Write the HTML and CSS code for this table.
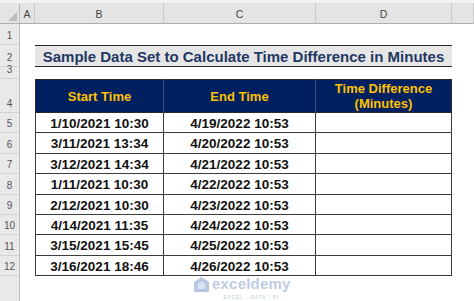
FILE: index.html
```html
<!DOCTYPE html>
<html>
<head>
<meta charset="utf-8">
<link rel="stylesheet" href="styles.css">
</head>
<body>
<div class="sheet">
  <div class="row hdr">
    <div class="rh corner"><span class="tri"></span></div>
    <div class="ca ch">A</div>
    <div class="cb ch">B</div>
    <div class="cc ch">C</div>
    <div class="cd ch">D</div>
    <div class="ce ch"></div>
  </div>
  <div class="row r1"><div class="rh">1</div></div>
  <div class="row r2">
    <div class="rh">2</div>
    <div class="ca"></div>
    <div class="title">Sample Data Set to Calculate Time Difference in Minutes</div>
  </div>
  <div class="row r3"><div class="rh">3</div></div>
  <div class="row r4">
    <div class="rh">4</div>
    <div class="ca"></div>
    <div class="cb th first">Start Time</div>
    <div class="cc th">End Time</div>
    <div class="cd th">Time Difference<br>(Minutes)</div>
  </div>
  <div class="row rd h20"><div class="rh">5</div><div class="ca"></div><div class="cb td first">1/10/2021 10:30</div><div class="cc td">4/19/2022 10:53</div><div class="cd td"></div></div>
  <div class="row rd h21"><div class="rh">6</div><div class="ca"></div><div class="cb td first">3/11/2021 13:34</div><div class="cc td">4/20/2022 10:53</div><div class="cd td"></div></div>
  <div class="row rd h20"><div class="rh">7</div><div class="ca"></div><div class="cb td first">3/12/2021 14:34</div><div class="cc td">4/21/2022 10:53</div><div class="cd td"></div></div>
  <div class="row rd h21"><div class="rh">8</div><div class="ca"></div><div class="cb td first">1/11/2021 10:30</div><div class="cc td">4/22/2022 10:53</div><div class="cd td"></div></div>
  <div class="row rd h20"><div class="rh">9</div><div class="ca"></div><div class="cb td first">2/12/2021 10:30</div><div class="cc td">4/23/2022 10:53</div><div class="cd td"></div></div>
  <div class="row rd h20"><div class="rh">10</div><div class="ca"></div><div class="cb td first">4/14/2021 11:35</div><div class="cc td">4/24/2022 10:53</div><div class="cd td"></div></div>
  <div class="row rd h21"><div class="rh">11</div><div class="ca"></div><div class="cb td first">3/15/2021 15:45</div><div class="cc td">4/25/2022 10:53</div><div class="cd td"></div></div>
  <div class="row rd h20"><div class="rh">12</div><div class="ca"></div><div class="cb td first">3/16/2021 18:46</div><div class="cc td">4/26/2022 10:53</div><div class="cd td"></div></div>
  <div class="row r13"><div class="rh"></div></div>

  <div class="watermark">
    <svg class="logo" width="17" height="17" viewBox="0 0 17 17">
      <path d="M8.5 1 L16 6 L16 16 L1 16 L1 6 Z" fill="#a9bedd"/>
      <path d="M8.5 5 L12.5 8 L12.5 13 L4.5 13 L4.5 8 Z" fill="#d3deee"/>
    </svg>
    <div class="wm-text">
      <div class="wm-name">exceldemy</div>
      <div class="wm-sub">EXCEL · DATA · BI</div>
    </div>
  </div>
</div>
</body>
</html>
```

FILE: styles.css
```css
html, body {
  margin: 0;
  padding: 0;
  background: #ffffff;
  overflow: hidden;
}
.sheet {
  position: relative;
  width: 474px;
  height: 301px;
  font-family: "Liberation Sans", Arial, sans-serif;
  overflow: hidden;
}
.row {
  display: flex;
  box-sizing: border-box;
}
.row > div {
  box-sizing: border-box;
  flex: none;
}
.rh {
  width: 20px;
  background: #e9e9e9;
  border-right: 1px solid #bcbcbc;
  border-bottom: 1px solid #d2d2d2;
  color: #555;
  font-size: 10px;
  display: flex;
  align-items: flex-end;
  justify-content: center;
  padding-bottom: 3px;
}
.ca { width: 15px; }
.cb { width: 129px; }
.cc { width: 152px; }
.cd { width: 136px; }
.ce { width: 22px; }

.hdr {
  height: 24px;
  border-top: 3px solid #f2f2f2;
}
.hdr > div {
  background: #e4e4e4;
  border-bottom: 1px solid #aeaeae;
}
.ch {
  border-right: 1px solid #c9c9c9;
  color: #444;
  font-size: 10.5px;
  display: flex;
  align-items: center;
  justify-content: center;
  padding-top: 1px;
}
.corner {
  position: relative;
  padding: 0;
}
.tri {
  position: absolute;
  right: 2px;
  bottom: 2px;
  width: 0;
  height: 0;
  border-left: 9px solid transparent;
  border-bottom: 9px solid #bdbdbd;
}

.r1 { height: 21px; }
.r2 { height: 22px; }
.r3 { height: 12px; }
.r4 { height: 34px; }
.h20 { height: 20px; }
.h21 { height: 21px; }
.r13 { height: 30px; }
.r13 .rh { border-bottom: none; }

.title {
  width: 417px;
  background: #e7e6e6;
  border-top: 1px solid #2a2a2a;
  border-bottom: 1px solid #2a2a2a;
  color: #1f3864;
  font-weight: bold;
  font-size: 15px;
  display: flex;
  align-items: center;
  justify-content: center;
  white-space: nowrap;
}

.th {
  background: #002060;
  color: #ffc000;
  font-weight: bold;
  font-size: 13px;
  line-height: 15px;
  text-align: center;
  display: flex;
  align-items: center;
  justify-content: center;
  border-right: 1px solid #3a4f7e;
  border-top: 1px solid #2a2a2a;
  border-bottom: 1px solid #2a2a2a;
}
.th.first { border-left: 1px solid #2a2a2a; }
.r4 .cd.th { border-right: 1px solid #2a2a2a; }

.td {
  color: #111;
  font-weight: bold;
  font-size: 13.5px;
  display: flex;
  align-items: center;
  justify-content: center;
  border-right: 1px solid #3c3c3c;
  border-bottom: 1px solid #3c3c3c;
  padding-top: 1px;
}
.td.first { border-left: 1px solid #3c3c3c; }

.watermark {
  position: absolute;
  left: 193px;
  top: 276px;
  display: flex;
  align-items: flex-start;
  gap: 2px;
  opacity: 0.85;
}
.logo { margin-top: 0; }
.wm-text {
  display: flex;
  flex-direction: column;
  align-items: center;
}
.wm-name {
  font-family: "Liberation Sans", Arial, sans-serif;
  font-size: 15px;
  font-weight: bold;
  line-height: 16px;
  color: #b3c5e0;
  letter-spacing: 0.2px;
}
.wm-sub {
  margin-top: 2px;
  font-size: 5px;
  line-height: 6px;
  color: #b8c6da;
  letter-spacing: 0.8px;
}
```
